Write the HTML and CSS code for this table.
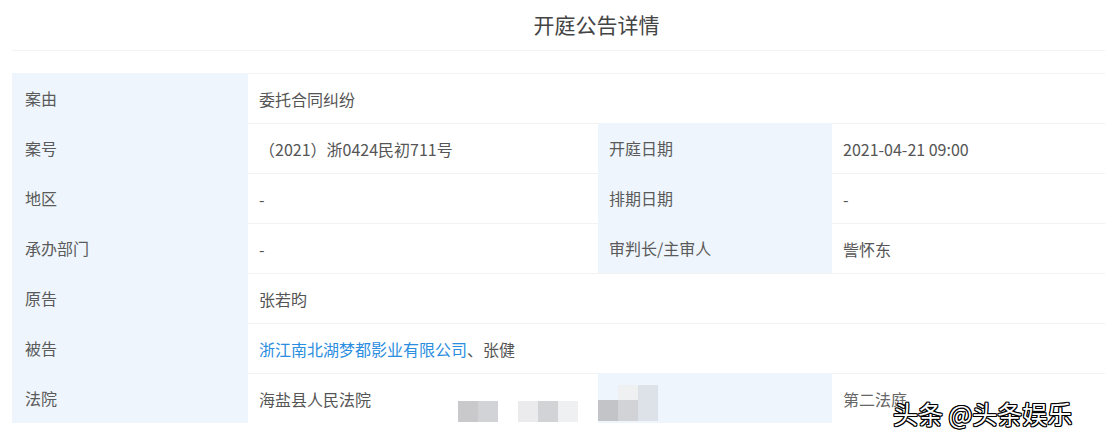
FILE: index.html
```html
<!DOCTYPE html>
<html lang="zh">
<head>
<meta charset="utf-8">
<link rel="stylesheet" href="styles.css">
</head>
<body>
<div class="page">
  <h1 class="title">开庭公告详情</h1>
  <div class="sep"></div>
  <div class="table">
    <div class="lab">案由</div><div class="val span3">委托合同纠纷</div>
    <div class="lab">案号</div><div class="val">（2021）浙0424民初711号</div>
    <div class="lab lab2">开庭日期</div><div class="val">2021-04-21 09:00</div>
    <div class="lab">地区</div><div class="val">-</div>
    <div class="lab lab2">排期日期</div><div class="val">-</div>
    <div class="lab">承办部门</div><div class="val">-</div>
    <div class="lab lab2">审判长/主审人</div><div class="val">訾怀东</div>
    <div class="lab">原告</div><div class="val span3">张若昀</div>
    <div class="lab">被告</div><div class="val span3"><span class="link">浙江南北湖梦都影业有限公司</span>、张健</div>
    <div class="lab">法院</div><div class="val mos-host">海盐县人民法院
      <div class="mosaic m1"><i class="g1"></i><i class="g2"></i></div>
      <div class="mosaic m2"><i class="g3"></i><i class="g2"></i><i class="g4"></i></div>
    </div>
    <div class="lab lab2 mos-host">
      <div class="mosaic m4"><i class="g4"></i><i class="g6"></i></div>
      <div class="mosaic m3"><i class="g5"></i><i class="g2"></i><i class="g6"></i></div>
    </div>
    <div class="val last">第二法庭</div>
  </div>
  <div class="wm">头条 @头条娱乐</div>
</div>
</body>
</html>
```
FILE: styles.css
```css
* { box-sizing: border-box; }
html, body { margin: 0; padding: 0; background: #fff; }
body {
  font-family: "Noto Sans CJK SC", "Noto Sans", sans-serif;
  color: #555;
  width: 1116px;
  height: 442px;
  overflow: hidden;
}
.page { position: relative; padding: 0 11px 0 12px; }
.title {
  margin: 0;
  height: 50px;
  padding-top: 10px;
  padding-left: 76px;
  text-align: center;
  font-size: 21px;
  font-weight: normal;
  color: #444;
  line-height: 28px;
}
.sep { height: 1px; background: #f2f3f5; margin-bottom: 22px; }
.table {
  display: grid;
  grid-template-columns: 236px 350px 234px 273px;
  grid-auto-rows: 50px;
}
.lab {
  background: #eef5fc;
  display: flex;
  align-items: center;
  padding-left: 13px;
  font-size: 16px;
  color: #5a5a5a;
}
.lab2 { padding-left: 11px; }
.val {
  display: flex;
  align-items: center;
  padding-left: 11px;
  font-size: 16px;
  color: #555;
  border-top: 1px solid #f1f2f4;
}
.span3 { grid-column: span 3; }
.link { color: #2b8de0; }
.mos-host { position: relative; }
.mosaic { position: absolute; top: 27px; display: flex; }
.mosaic i { display: block; width: 20px; height: 21px; }
.m1 { left: 210px; }
.m2 { left: 270px; }
.m3 { left: 0; }
.m4 { left: 20px; top: 12px; }
.m4 i { height: 15px; }
.g1 { background: #c9c9cb; }
.g2 { background: #d2d3d6; }
.g3 { background: #ebebed; }
.g4 { background: #eff0f2; }
.g5 { background: #c3c4c8; }
.g6 { background: #dde1e8; }
.last { color: #666; }
.wm {
  position: absolute;
  left: 893px;
  top: 395px;
  font-size: 25px;
  color: #fff;
  letter-spacing: 0;
  text-shadow: 1px 1px 0 #000, -1px -1px 0 #000, 1px -1px 0 #000, -1px 1px 0 #000, 0 1px 0 #000, 1px 0 0 #000, 0 -1px 0 #000, -1px 0 0 #000;
}
```
